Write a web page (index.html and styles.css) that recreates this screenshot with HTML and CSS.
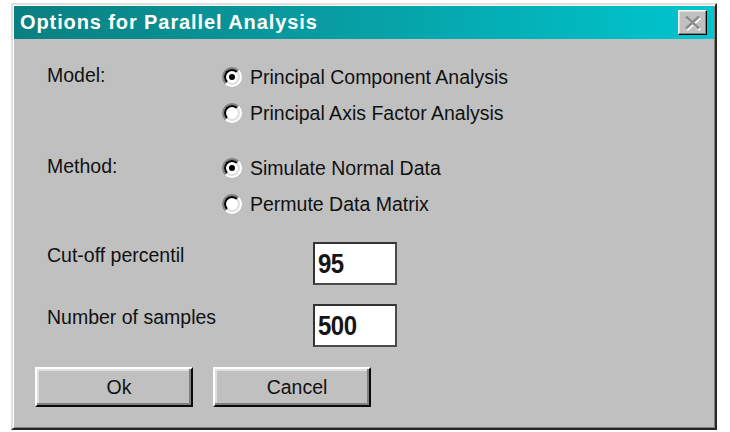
FILE: index.html
```html
<!DOCTYPE html>
<html lang="en">
<head>
    <meta charset="UTF-8">
    <title>Options for Parallel Analysis</title>
    <link rel="stylesheet" href="styles.css">
</head>
<body>
    <div class="window">
        <div class="titlebar">
            <span class="title">Options for Parallel Analysis</span>
            <span class="close">
                <svg width="18" height="16" viewBox="0 0 18 16">
                    <path d="M3 3 L16 15 M16 3 L3 15" stroke="#ffffff" stroke-width="2.5"/>
                    <path d="M2 1.5 L15 13.5 M15 1.5 L2 13.5" stroke="#8c8c8c" stroke-width="2.5"/>
                </svg>
            </span>
        </div>

        <div class="content">
            <div class="group">
                <div class="label">Model:</div>
                <div class="options">
                    <div class="option"><span class="radio checked"></span>Principal Component Analysis</div>
                    <div class="option"><span class="radio"></span>Principal Axis Factor Analysis</div>
                </div>
            </div>

            <div class="group">
                <div class="label">Method:</div>
                <div class="options">
                    <div class="option"><span class="radio checked"></span>Simulate Normal Data</div>
                    <div class="option"><span class="radio"></span>Permute Data Matrix</div>
                </div>
            </div>

            <div class="field">
                <div class="label">Cut-off percentil</div>
                <div class="input"><span class="value">95</span></div>
            </div>

            <div class="field">
                <div class="label">Number of samples</div>
                <div class="input"><span class="value">500</span></div>
            </div>

            <div class="buttons">
                <div class="btn">Ok</div>
                <div class="btn">Cancel</div>
            </div>
        </div>
    </div>
</body>
</html>
```

FILE: styles.css
```css
body {
    margin: 0;
    background: #ffffff;
    font-family: 'Liberation Sans', Arial, sans-serif;
}

.window {
    margin: 3px 0 0 11px;
    width: 706px;
    height: 427px;
    box-sizing: border-box;
    background: #c0c0c0;
    border: 2px solid;
    border-color: #dfdfdf #262626 #262626 #dfdfdf;
    box-shadow: inset 1px 1px #ffffff, inset -1px -1px #808080;
    padding: 1px;
}

.titlebar {
    height: 33px;
    display: flex;
    align-items: center;
    justify-content: space-between;
    padding: 0 7px 0 6px;
    background: linear-gradient(to right, #0b7f80, #07a0a6 50%, #00c6cf);
}

.title {
    color: #ffffff;
    font-weight: bold;
    font-size: 20px;
    letter-spacing: 0.9px;
}

.close {
    width: 29px;
    height: 25px;
    box-sizing: border-box;
    background: #c0c0c0;
    border: 1px solid;
    border-color: #ffffff #000000 #000000 #ffffff;
    box-shadow: inset -1px -1px #808080, inset 1px 1px #dfdfdf;
    display: flex;
    align-items: center;
    justify-content: center;
}

.content {
    padding: 20px 0 0 21px;
    font-size: 19.5px;
    color: #111111;
}

.group {
    display: grid;
    grid-template-columns: 175px auto;
    margin-left: 12px;
}

.group + .group {
    margin-top: 19px;
}

.group .label {
    line-height: 32px;
}

.option {
    height: 36px;
    display: flex;
    align-items: center;
    gap: 8px;
}

.radio {
    position: relative;
    width: 20px;
    height: 20px;
    box-sizing: border-box;
    border-radius: 50%;
    border: 2px solid;
    border-color: #808080 #ffffff #ffffff #808080;
    background: #ffffff;
}

.radio::before {
    content: "";
    position: absolute;
    inset: 0;
    border-radius: 50%;
    border: 2px solid;
    border-color: #000000 #dfdfdf #dfdfdf #000000;
}

.radio.checked::after {
    content: "";
    position: absolute;
    left: 5px;
    top: 5px;
    width: 6px;
    height: 6px;
    border-radius: 50%;
    background: #000000;
}

.field {
    display: grid;
    grid-template-columns: 266px 84px;
    margin: 20px 0 0 12px;
}

.field + .field {
    margin-top: 19px;
}

.field .label {
    line-height: 24px;
    padding-top: 1px;
}

.input {
    height: 43px;
    box-sizing: border-box;
    background: #ffffff;
    border: 2px solid;
    border-color: #333333 #4a4a4a #4a4a4a #333333;
    padding-left: 3px;
    display: flex;
    align-items: center;
    color: #151515;
}

.value {
    display: inline-block;
    font-weight: bold;
    font-size: 24px;
    letter-spacing: -0.5px;
    transform: scaleY(1.12);
    transform-origin: left center;
}

.buttons {
    display: flex;
    gap: 20px;
    margin-top: 20px;
}

.btn {
    width: 158px;
    height: 40px;
    box-sizing: border-box;
    border: 2px solid;
    border-color: #ffffff #0a0a0a #0a0a0a #ffffff;
    box-shadow: inset -2px -2px #808080, inset 2px 2px #dfdfdf;
    display: flex;
    align-items: center;
    justify-content: center;
    padding-left: 10px;
}
```
